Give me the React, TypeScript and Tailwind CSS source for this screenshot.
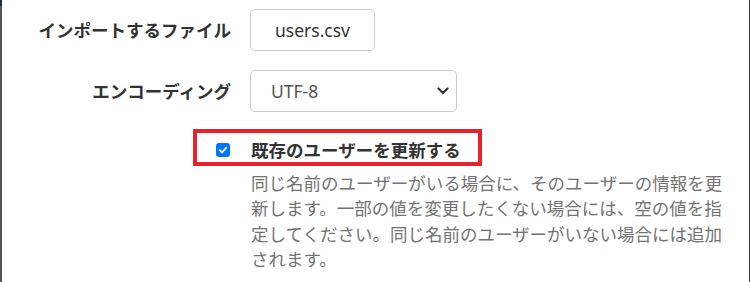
const jp = "font-['Noto_Sans','Noto_Sans_CJK_JP',sans-serif]"

const App = () => {
  return (
    <div className={`flex h-[282px] w-[750px] bg-white text-[17.5px] ${jp}`}>
      {/* left edge of the window behind */}
      <div className="flex w-[2px] flex-col">
        <div className="h-[6px] bg-[#1b2f45]"></div>
        <div className="flex-1 bg-[#555555]"></div>
      </div>

      <div className="flex-1 border-r border-[#3a3a3a]">
        {/* file row */}
        <div className="flex items-center pt-[9px]">
          <div className="w-[248px] pr-[19px] text-right font-bold leading-[25px] text-[#333333]">
            インポートするファイル
          </div>
          <button className="flex h-[42px] w-[125px] items-center justify-center rounded-[5px] border border-[#cccccc] bg-white text-[#333333]">
            users.csv
          </button>
        </div>

        {/* encoding row */}
        <div className="mt-[19px] flex items-center">
          <div className="w-[248px] pr-[19px] text-right font-bold leading-[25px] text-[#333333]">
            エンコーディング
          </div>
          <div className="flex h-[42px] w-[207px] items-center justify-between rounded-[5px] border border-[#cccccc] bg-white pl-[20px] pr-[7px] text-[#555555]">
            <span>UTF-8</span>
            <svg width="12" height="8" viewBox="0 0 12 8" fill="none">
              <path d="M1.5 1.5 L6 6 L10.5 1.5" stroke="#333333" strokeWidth="2.2" strokeLinecap="round" strokeLinejoin="round" />
            </svg>
          </div>
        </div>

        {/* update existing users */}
        <div className="ml-[191px] mt-[17px] flex h-[37px] w-[289px] items-center border-4 border-[#e8212b] pl-[19px] pt-[5px]">
          <span className="flex h-[14px] w-[14px] items-center justify-center rounded-[3px] bg-[#0075ff]">
            <svg width="10" height="10" viewBox="0 0 10 10" fill="none">
              <path d="M1.8 5.2 L4 7.4 L8.3 2.6" stroke="white" strokeWidth="1.8" strokeLinecap="round" strokeLinejoin="round" />
            </svg>
          </span>
          <span className="ml-[21px] font-bold leading-[25px] text-[#333333]">既存のユーザーを更新する</span>
        </div>

        <p className="ml-[249px] mt-[5px] w-[480px] leading-[25.3px] text-[#737373]">
          同じ名前のユーザーがいる場合に、そのユーザーの情報を更新します。一部の値を変更したくない場合には、空の値を指定してください。同じ名前のユーザーがいない場合には追加されます。
        </p>
      </div>
    </div>
  )
}

export default App
